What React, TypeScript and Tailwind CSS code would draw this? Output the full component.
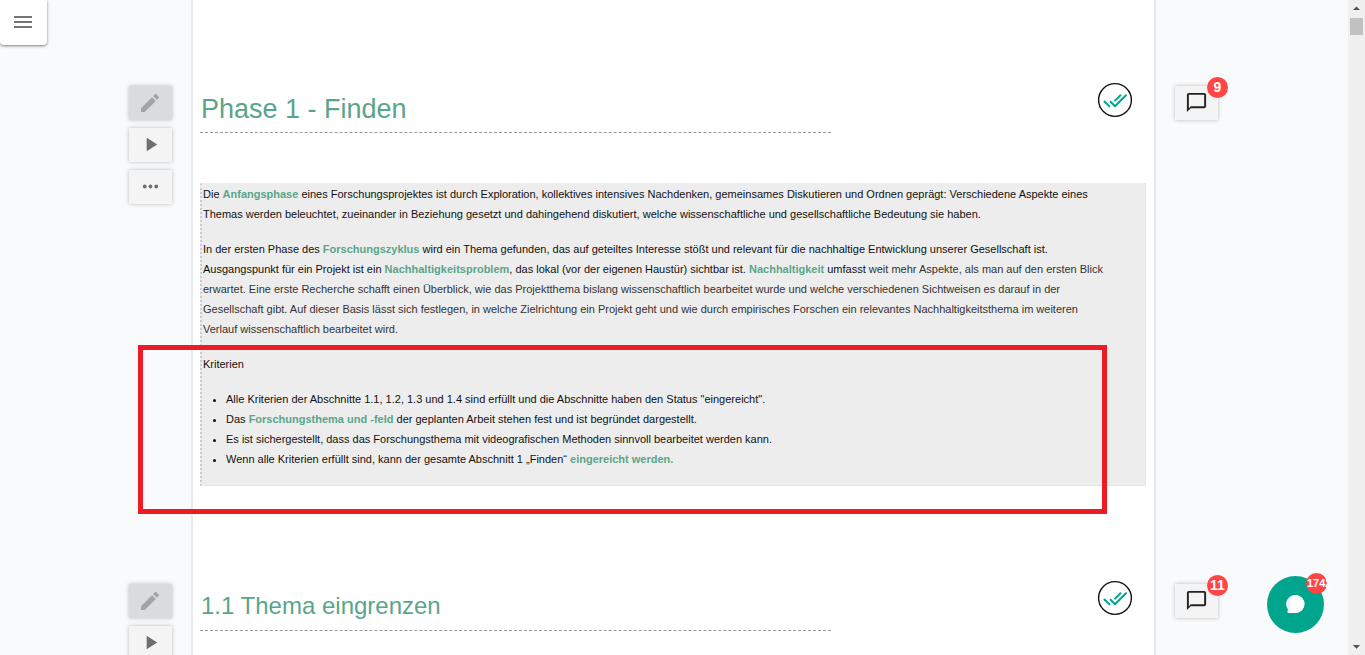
import type { ReactNode } from "react";
import {
  MdArrowDropDown,
  MdArrowDropUp,
  MdEdit,
  MdMenu,
  MdMoreHoriz,
  MdOutlineChatBubbleOutline,
  MdPlayArrow,
} from "react-icons/md";

function ToolButton({ label, disabled = false, children }: { label: string; disabled?: boolean; children: ReactNode }) {
  return (
    <button
      type="button"
      aria-label={label}
      disabled={disabled}
      className="flex h-[34px] w-[43px] items-center justify-center bg-[#f4f4f4] pr-px pb-px text-[#6e6e6e] shadow-[0_0_4px_rgba(0,0,0,0.25)] disabled:bg-[#dadbdd] disabled:text-[#a2a3a5]"
    >
      {children}
    </button>
  );
}

function DoubleCheck() {
  return (
    <svg viewBox="0 0 36 36" className="mr-[13px] size-9 shrink-0" fill="none" role="img" aria-label="Eingereicht">
      <circle cx="18" cy="18" r="16.4" stroke="#111" strokeWidth="1.4" />
      <g stroke="#00a78e" strokeWidth="2" strokeLinecap="round" strokeLinejoin="round">
        <path d="M7.500 19.500l4.900 4.900" />
        <path d="M13.600 19.800l4.400 4.400L29 13.200" />
        <path d="M18 18.600l5.500-5.400" />
      </g>
    </svg>
  );
}

function Comments({ count }: { count: number }) {
  return (
    <button
      type="button"
      aria-label={`${count} Kommentare`}
      className="relative flex h-[34px] w-[43px] items-center justify-center bg-[#f4f4f4] pb-0.5 text-[#222] shadow-[0_0_4px_rgba(0,0,0,0.25)]"
    >
      <MdOutlineChatBubbleOutline size={23} />
      <span className="absolute -top-[9px] -right-[10px] flex size-[21px] items-center justify-center rounded-full bg-[#ff4545] pb-0.5 text-sm leading-none font-bold text-white">
        {count}
      </span>
    </button>
  );
}

function Term({ children }: { children: ReactNode }) {
  return (
    <a href="#" className="font-bold text-[#5aa58a]">
      {children}
    </a>
  );
}

function Section({
  heading,
  count,
  className,
  children,
}: {
  heading: ReactNode;
  count: number;
  className: string;
  children?: ReactNode;
}) {
  return (
    <section className={`grid grid-cols-[191px_minmax(0,1fr)_192px] ${className}`}>
      <div className="flex flex-col items-end gap-2 pt-4 pr-[19px]">
        <ToolButton label="Bearbeiten" disabled>
          <MdEdit size={24} />
        </ToolButton>
        <ToolButton label="Abspielen">
          <MdPlayArrow size={23} />
        </ToolButton>
        <ToolButton label="Mehr">
          <MdMoreHoriz size={23} />
        </ToolButton>
      </div>
      <div className="border-x-2 border-[#e9eaeb] bg-white pr-2 pl-[7px]">
        <div className="flex items-start justify-between pt-3">
          <div className="h-[51px] w-2/3 border-b border-dashed border-[#999] pt-2 pl-px">{heading}</div>
          <DoubleCheck />
        </div>
        {children}
      </div>
      <div className="pt-4 pl-[19px]">
        <Comments count={count} />
      </div>
    </section>
  );
}

export default function App() {
  return (
    <div className="flex h-screen overflow-hidden bg-[#f9fafc] font-['Liberation_Sans',Arial,sans-serif]">
      <button
        type="button"
        aria-label="Menü"
        className="absolute top-0 left-0 z-10 flex h-[45px] w-[47px] items-center justify-center rounded-b bg-white pr-px pb-px text-[#757575] shadow-[0_1px_3px_rgba(0,0,0,0.5)]"
      >
        <MdMenu size={24} />
      </button>

      <main className="flex min-w-0 flex-1 flex-col overflow-hidden">
        <div className="grid h-[70px] shrink-0 grid-cols-[191px_minmax(0,1fr)_192px]">
          <div className="col-start-2 border-x-2 border-[#e9eaeb] bg-white" />
        </div>

        <Section
          count={9}
          className="relative shrink-0"
          heading={<h1 className="text-[27px] leading-[38px] text-[#5aa58a]">Phase 1 - Finden</h1>}
        >
          <div className="mt-[50px] mb-[82px] border border-l-2 border-dotted border-[#e0e0e0] border-l-[#ccc] border-t-[#ededed] bg-[#ededed] pr-4 pb-4 pl-px text-[11px] leading-5 text-[#111]">
            <p>
              Die <Term>Anfangsphase</Term> eines Forschungsprojektes ist durch Exploration, kollektives intensives
              Nachdenken, gemeinsames Diskutieren und Ordnen geprägt: Verschiedene Aspekte eines
              <br />
              Themas werden beleuchtet, zueinander in Beziehung gesetzt und dahingehend diskutiert, welche
              wissenschaftliche und gesellschaftliche Bedeutung sie haben.
            </p>
            <p className="mt-[15px]">
              In der ersten Phase des <Term>Forschungszyklus</Term> wird ein Thema gefunden, das auf geteiltes
              Interesse stößt und relevant für die nachhaltige Entwicklung unserer Gesellschaft ist.
              <br />
              Ausgangspunkt für ein Projekt ist ein <Term>Nachhaltigkeitsproblem</Term>, das lokal (vor der eigenen
              Haustür) sichtbar ist. <Term>Nachhaltigkeit</Term> umfasst{" "}
              <span className="text-[#333]">
                weit mehr Aspekte, als man auf den ersten Blick
                <br />
                erwartet. Eine erste Recherche schafft einen Überblick, wie das Projektthema bislang wissenschaftlich
                bearbeitet wurde und welche verschiedenen Sichtweisen es darauf in der
                <br />
                Gesellschaft gibt. Auf dieser Basis lässt sich festlegen, in welche Zielrichtung ein Projekt geht und
                wie durch empirisches Forschen ein relevantes Nachhaltigkeitsthema im weiteren
                <br />
                Verlauf wissenschaftlich bearbeitet wird.
              </span>
            </p>
            <p className="mt-[15px]">Kriterien</p>
            <ul className="mt-[15px] list-disc pl-[23px]">
              <li>
                Alle Kriterien der Abschnitte 1.1, 1.2, 1.3 und 1.4 sind erfüllt und die Abschnitte haben den Status
                "eingereicht".
              </li>
              <li>
                Das <Term>Forschungsthema und -feld</Term> der geplanten Arbeit stehen fest und ist begründet
                dargestellt.
              </li>
              <li>
                Es ist sichergestellt, dass das Forschungsthema mit videografischen Methoden sinnvoll bearbeitet
                werden kann.
              </li>
              <li>
                Wenn alle Kriterien erfüllt sind, kann der gesamte Abschnitt 1 „Finden“{" "}
                <Term>eingereicht werden.</Term>
              </li>
            </ul>
          </div>
          <div className="pointer-events-none absolute right-[241px] bottom-[54px] left-[138px] h-[169px] border-5 border-[#ed1c24]" />
        </Section>

        <Section
          count={11}
          className="flex-1"
          heading={<h2 className="text-2xl leading-[36px] text-[#5aa58a]">1.1 Thema eingrenzen</h2>}
        />
      </main>

      <div aria-hidden="true" className="flex w-[17px] shrink-0 flex-col items-center bg-[#f0f0f0] text-[#505050]">
        <MdArrowDropUp size={17} />
        <div className="mt-px h-[17px] w-[13px] bg-[#c1c1c1]" />
        <MdArrowDropDown size={17} className="mt-auto" />
      </div>

      <button
        type="button"
        aria-label="Chat"
        className="absolute right-[41px] bottom-[22px] flex size-[57px] items-center justify-center rounded-full bg-[#00a58e] pr-0.5 pb-0.5"
      >
        <svg viewBox="0 0 20 20" className="size-5" fill="none">
          <path d="M10.500 1a9 9 0 1 1 0 18H3.400c-.9 0-1.200-.6-1-1.300l.5-2.400A9 9 0 0 1 10.500 1z" fill="#e6eefa" />
          <path d="M10.500 1a9 9 0 0 1 0 18H4.500c1.300-1 1.200-2.500.6-5C4 8 6 2.500 10.500 1z" fill="#fff" />
        </svg>
        <span className="absolute -top-[3px] -right-[3px] flex size-[21px] items-center rounded-full bg-[#ff4545] pl-px text-[11px] leading-none font-bold text-white">
          1742
        </span>
      </button>
    </div>
  );
}
